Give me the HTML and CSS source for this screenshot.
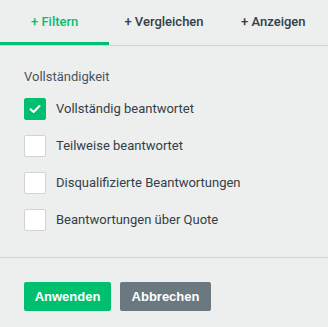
FILE: index.html
```html
<!DOCTYPE html>
<html lang="de">

<head>
    <meta charset="UTF-8">
    <meta name="viewport" content="width=device-width, initial-scale=1.0">
    <title>Filter</title>
    <link rel="stylesheet" href="styles.css">
</head>

<body>
    <div class="panel">
        <div class="tabs">
            <div class="tab active">+ Filtern</div>
            <div class="tab">+ Vergleichen</div>
            <div class="tab">+ Anzeigen</div>
        </div>

        <div class="filter-body">
            <div class="group-title">Vollständigkeit</div>
            <div class="options">
                <label class="option">
                    <span class="checkbox checked">
                        <svg width="14" height="14" viewBox="0 0 14 14">
                            <path d="M2.5 7.2 L5.6 10 L11.5 4" fill="none" stroke="#fff" stroke-width="2" stroke-linecap="round" stroke-linejoin="round"/>
                        </svg>
                    </span>
                    Vollständig beantwortet
                </label>
                <label class="option">
                    <span class="checkbox"></span>
                    Teilweise beantwortet
                </label>
                <label class="option">
                    <span class="checkbox"></span>
                    Disqualifizierte Beantwortungen
                </label>
                <label class="option">
                    <span class="checkbox"></span>
                    Beantwortungen über Quote
                </label>
            </div>
        </div>

        <div class="actions">
            <button class="btn btn-apply">Anwenden</button>
            <button class="btn btn-cancel">Abbrechen</button>
        </div>
    </div>
</body>

</html>
```

FILE: styles.css
```css
body {
    margin: 0;
    padding: 0;
    background-color: #edeeee;
    font-family: Roboto, "Liberation Sans", Arial, sans-serif;
    color: #333e48;
}

.panel {
    width: 328px;
}

.tabs {
    display: flex;
    border-bottom: 1px solid #d2d4d4;
}

.tab {
    flex: 1;
    height: 45px;
    box-sizing: border-box;
    display: flex;
    align-items: center;
    justify-content: center;
    padding-bottom: 3px;
    font-size: 13px;
    font-weight: 500;
    color: #333e48;
}

.tab.active {
    color: #00bf6f;
    border-bottom: 3px solid #00bf6f;
    padding-bottom: 0;
}

.filter-body {
    padding: 21px 24px 26px;
    border-bottom: 1px solid #d2d4d4;
}

.group-title {
    font-size: 13px;
    line-height: 20px;
    margin-bottom: 11px;
    color: #4a545d;
}

.options {
    display: flex;
    flex-direction: column;
    gap: 15px;
}

.option {
    display: flex;
    align-items: center;
    gap: 10px;
    font-size: 13px;
    line-height: 22px;
}

.checkbox {
    width: 22px;
    height: 22px;
    box-sizing: border-box;
    background-color: #fff;
    border: 1px solid #d2d4d4;
    border-radius: 2px;
    display: flex;
    align-items: center;
    justify-content: center;
}

.checkbox.checked {
    background-color: #00bf6f;
    border-color: #00bf6f;
}

.actions {
    display: flex;
    gap: 9px;
    padding: 24px 24px 0;
}

.btn {
    height: 29px;
    border: none;
    border-radius: 2px;
    padding: 0;
    font-family: "Liberation Sans", Arial, sans-serif;
    font-size: 13px;
    font-weight: bold;
    color: #fff;
}

.btn-apply {
    width: 87px;
    background-color: #00bf6f;
}

.btn-cancel {
    width: 91px;
    background-color: #6b787f;
}
```
